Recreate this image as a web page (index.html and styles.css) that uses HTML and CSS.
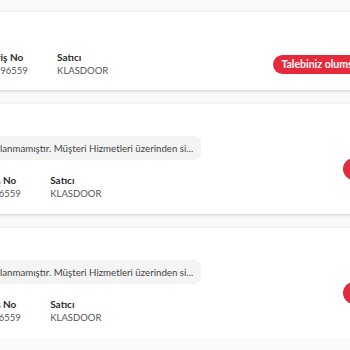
FILE: index.html
```html
<!DOCTYPE html>
<html lang="tr">
<head>
  <meta charset="UTF-8" />
  <meta name="viewport" content="width=device-width, initial-scale=1.0"/>
  <title>Taleplerim</title>
  <link rel="stylesheet" href="styles.css">
</head>
<body>

<div class="list">

  <!-- Talep 1 -->
  <div class="card card-short">
    <div class="card-main">
      <div class="details">
        <div class="col">
          <span class="label">Talep No</span>
          <span class="value">10048812</span>
        </div>
        <div class="col col-order">
          <span class="label">Sipariş No</span>
          <span class="value">320196559</span>
        </div>
        <div class="col">
          <span class="label">Satıcı</span>
          <span class="value">KLASDOOR</span>
        </div>
      </div>
    </div>
    <span class="badge">Talebiniz olumsuz sonuçlandı</span>
  </div>

  <!-- Talep 2 -->
  <div class="card">
    <div class="card-main">
      <div class="message">İade talebiniz onaylanmamıştır. Müşteri Hizmetleri üzerinden si...</div>
      <div class="details">
        <div class="col">
          <span class="label">Talep No</span>
          <span class="value">1004881</span>
        </div>
        <div class="col col-order">
          <span class="label">Sipariş No</span>
          <span class="value">320196559</span>
        </div>
        <div class="col">
          <span class="label">Satıcı</span>
          <span class="value">KLASDOOR</span>
        </div>
      </div>
    </div>
    <span class="badge badge-round">Reddedildi</span>
  </div>

  <!-- Talep 3 -->
  <div class="card">
    <div class="card-main">
      <div class="message">İade talebiniz onaylanmamıştır. Müşteri Hizmetleri üzerinden si...</div>
      <div class="details">
        <div class="col">
          <span class="label">Talep No</span>
          <span class="value">1004880</span>
        </div>
        <div class="col col-order">
          <span class="label">Sipariş No</span>
          <span class="value">320196559</span>
        </div>
        <div class="col">
          <span class="label">Satıcı</span>
          <span class="value">KLASDOOR</span>
        </div>
      </div>
    </div>
    <span class="badge badge-round">Reddedildi</span>
  </div>

</div>

</body>
</html>
```

FILE: styles.css
```css
* {
  margin: 0;
  padding: 0;
  box-sizing: border-box;
  font-family: Lato, Arial, sans-serif;
}

body {
  background-color: #fafafa;
  color: #333;
  overflow: hidden;
}

/* Liste */
.list {
  width: 544px;
  margin-left: -100px;
  padding-top: 12px;
  display: flex;
  flex-direction: column;
  gap: 14px;
}

.card {
  background: #fff;
  display: flex;
  align-items: center;
  justify-content: space-between;
  padding: 32px 20px 13px 10px;
  box-shadow: 0 1px 3px rgba(0, 0, 0, 0.18);
}

.card-short {
  padding: 38px 20px 12px 12px;
}

.card-main {
  display: flex;
  flex-direction: column;
  align-items: flex-start;
  gap: 13px;
}

.message {
  background: #f4f4f4;
  border-radius: 7px;
  padding: 0 8px 0 11px;
  height: 24px;
  line-height: 24px;
  font-size: 9.7px;
  color: #444;
  white-space: nowrap;
}

.details {
  display: flex;
  gap: 22px;
}

.col {
  display: flex;
  flex-direction: column;
  font-size: 10px;
  line-height: 14px;
}

.col-order {
  width: 57px;
}

.label {
  font-weight: bold;
  color: #2b2b2b;
}

.value {
  font-size: 9.5px;
  color: #555;
}

.badge {
  background: #e52b3b;
  color: #fff;
  font-size: 10.5px;
  font-weight: bold;
  white-space: nowrap;
  height: 19px;
  line-height: 19px;
  padding: 0 8px;
  border-radius: 10px;
}

.badge-round {
  height: 22px;
  line-height: 22px;
  padding: 0 16px;
  border-radius: 11px;
}
```
